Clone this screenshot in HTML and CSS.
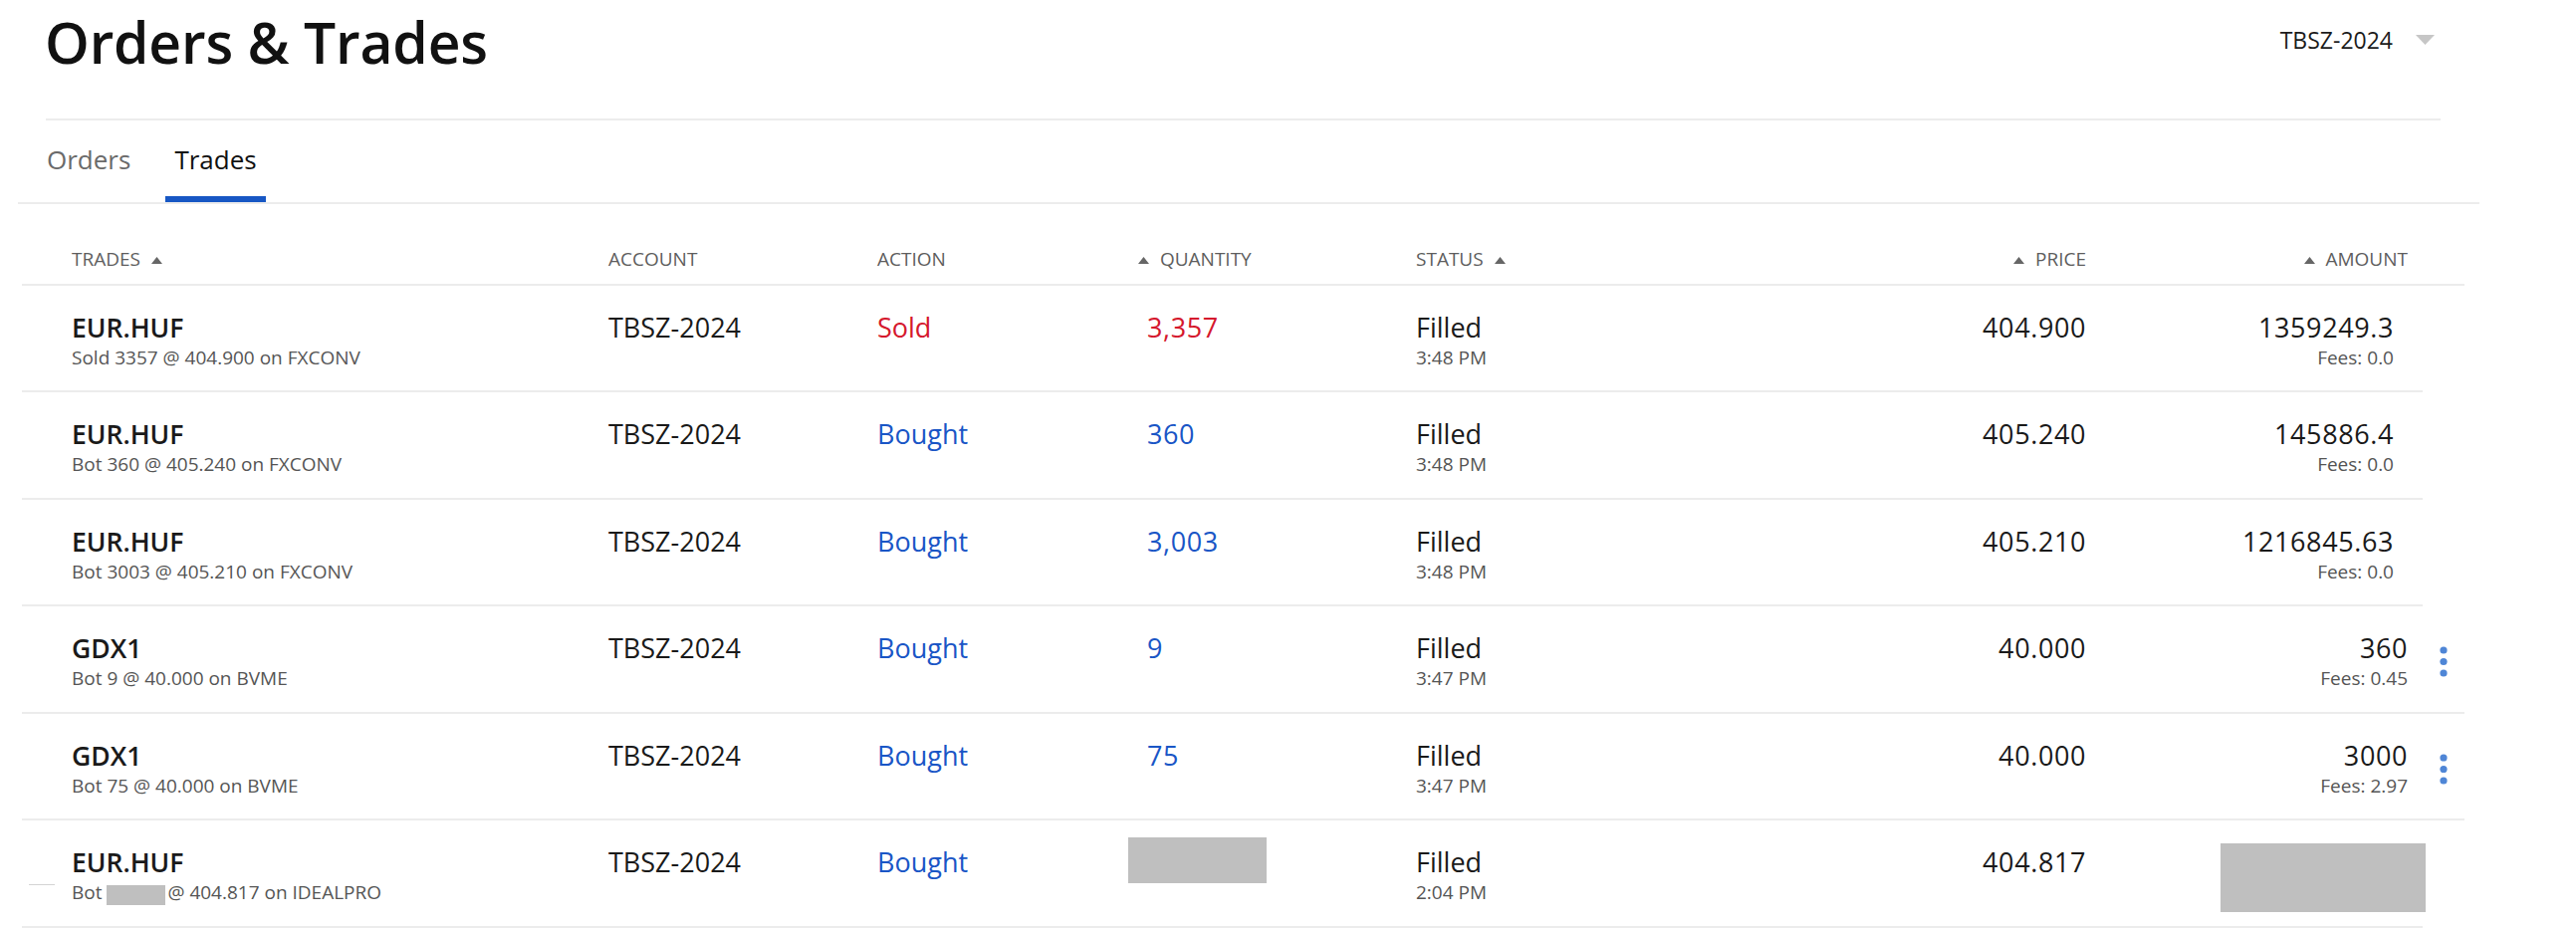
FILE: index.html
```html
<!DOCTYPE html>
<html lang="en">
<head>
<meta charset="utf-8">
<title>Orders &amp; Trades</title>
<link rel="stylesheet" href="styles.css">
</head>
<body>
<div class="page">
  <header class="top">
    <h1 class="title">Orders &amp; Trades</h1>
    <div class="acct">
      <span class="acct-name">TBSZ-2024</span>
      <svg class="caret" width="19" height="10" viewBox="0 0 19 10"><polygon points="0,0 19,0 9.5,10" fill="#c6c6c6"/></svg>
    </div>
  </header>

  <nav class="tabs">
    <a class="tab">Orders</a>
    <a class="tab tab-active">Trades</a>
  </nav>

  <div class="table">
    <div class="thead grid wide">
      <div class="th">TRADES <svg class="sort after" width="11" height="7" viewBox="0 0 11 7"><polygon points="0,7 5.5,0 11,7" fill="#666"/></svg></div>
      <div class="th">ACCOUNT</div>
      <div class="th">ACTION</div>
      <div class="th"><svg class="sort before" width="11" height="7" viewBox="0 0 11 7"><polygon points="0,7 5.5,0 11,7" fill="#666"/></svg> QUANTITY</div>
      <div class="th">STATUS <svg class="sort after" width="11" height="7" viewBox="0 0 11 7"><polygon points="0,7 5.5,0 11,7" fill="#666"/></svg></div>
      <div class="th right"><svg class="sort before" width="11" height="7" viewBox="0 0 11 7"><polygon points="0,7 5.5,0 11,7" fill="#666"/></svg> PRICE</div>
      <div class="th right"><svg class="sort before" width="11" height="7" viewBox="0 0 11 7"><polygon points="0,7 5.5,0 11,7" fill="#666"/></svg> AMOUNT</div>
      <div class="th"></div>
    </div>

    <div class="tr grid plain">
      <div class="cell"><div class="sym">EUR.HUF</div><div class="sub">Sold 3357 @ 404.900 on FXCONV</div></div>
      <div class="cell"><div class="main">TBSZ-2024</div></div>
      <div class="cell"><div class="main sold">Sold</div></div>
      <div class="cell qty"><div class="main num sold">3,357</div></div>
      <div class="cell"><div class="main">Filled</div><div class="sub">3:48 PM</div></div>
      <div class="cell right"><div class="main num">404.900</div></div>
      <div class="cell right"><div class="main num">1359249.3</div><div class="sub">Fees: 0.0</div></div>
      <div class="cell"></div>
    </div>

    <div class="tr grid plain">
      <div class="cell"><div class="sym">EUR.HUF</div><div class="sub">Bot 360 @ 405.240 on FXCONV</div></div>
      <div class="cell"><div class="main">TBSZ-2024</div></div>
      <div class="cell"><div class="main bought">Bought</div></div>
      <div class="cell qty"><div class="main num bought">360</div></div>
      <div class="cell"><div class="main">Filled</div><div class="sub">3:48 PM</div></div>
      <div class="cell right"><div class="main num">405.240</div></div>
      <div class="cell right"><div class="main num">145886.4</div><div class="sub">Fees: 0.0</div></div>
      <div class="cell"></div>
    </div>

    <div class="tr grid plain">
      <div class="cell"><div class="sym">EUR.HUF</div><div class="sub">Bot 3003 @ 405.210 on FXCONV</div></div>
      <div class="cell"><div class="main">TBSZ-2024</div></div>
      <div class="cell"><div class="main bought">Bought</div></div>
      <div class="cell qty"><div class="main num bought">3,003</div></div>
      <div class="cell"><div class="main">Filled</div><div class="sub">3:48 PM</div></div>
      <div class="cell right"><div class="main num">405.210</div></div>
      <div class="cell right"><div class="main num">1216845.63</div><div class="sub">Fees: 0.0</div></div>
      <div class="cell"></div>
    </div>

    <div class="tr grid wide">
      <div class="cell"><div class="sym">GDX1</div><div class="sub">Bot 9 @ 40.000 on BVME</div></div>
      <div class="cell"><div class="main">TBSZ-2024</div></div>
      <div class="cell"><div class="main bought">Bought</div></div>
      <div class="cell qty"><div class="main num bought">9</div></div>
      <div class="cell"><div class="main">Filled</div><div class="sub">3:47 PM</div></div>
      <div class="cell right"><div class="main num">40.000</div></div>
      <div class="cell right"><div class="main num">360</div><div class="sub">Fees: 0.45</div></div>
      <div class="cell menu"><svg class="kebab" width="8" height="31" viewBox="0 0 8 31"><circle cx="4" cy="4" r="3.6" fill="#4f86d6"/><circle cx="4" cy="15.5" r="3.6" fill="#4f86d6"/><circle cx="4" cy="27" r="3.6" fill="#4f86d6"/></svg></div>
    </div>

    <div class="tr grid wide">
      <div class="cell"><div class="sym">GDX1</div><div class="sub">Bot 75 @ 40.000 on BVME</div></div>
      <div class="cell"><div class="main">TBSZ-2024</div></div>
      <div class="cell"><div class="main bought">Bought</div></div>
      <div class="cell qty"><div class="main num bought">75</div></div>
      <div class="cell"><div class="main">Filled</div><div class="sub">3:47 PM</div></div>
      <div class="cell right"><div class="main num">40.000</div></div>
      <div class="cell right"><div class="main num">3000</div><div class="sub">Fees: 2.97</div></div>
      <div class="cell menu"><svg class="kebab" width="8" height="31" viewBox="0 0 8 31"><circle cx="4" cy="4" r="3.6" fill="#4f86d6"/><circle cx="4" cy="15.5" r="3.6" fill="#4f86d6"/><circle cx="4" cy="27" r="3.6" fill="#4f86d6"/></svg></div>
    </div>

    <div class="tr grid plain last">
      <span class="dash"></span>
      <div class="cell"><div class="sym">EUR.HUF</div><div class="sub">Bot <span class="redact-inline"></span>@ 404.817 on IDEALPRO</div></div>
      <div class="cell"><div class="main">TBSZ-2024</div></div>
      <div class="cell"><div class="main bought">Bought</div></div>
      <div class="cell qty"><div class="redact-qty"></div></div>
      <div class="cell"><div class="main">Filled</div><div class="sub">2:04 PM</div></div>
      <div class="cell right"><div class="main num">404.817</div></div>
      <div class="cell right"><div class="redact-amt"></div></div>
      <div class="cell"></div>
    </div>
  </div>
</div>
</body>
</html>
```

FILE: styles.css
```css
* { box-sizing: border-box; }

html, body {
  margin: 0;
  padding: 0;
  background: #ffffff;
}

body {
  font-family: "Open Sans", "Liberation Sans", sans-serif;
  color: #1a1a1a;
}

.page {
  width: 2587px;
}

/* ---------- top header ---------- */
.top {
  display: flex;
  justify-content: space-between;
  align-items: flex-start;
  margin-left: 46px;
  width: 2405px;
  padding-top: 8px;
  padding-bottom: 43px;
  border-bottom: 2px solid #ececec;
}

.title {
  margin: 0 0 0 -1px;
  font-size: 57px;
  line-height: 68px;
  font-weight: 600;
  color: #111111;
  letter-spacing: -0.2px;
}

.acct {
  display: flex;
  align-items: flex-start;
  margin-top: 17px;
  margin-right: 6px;
}

.acct-name {
  font-size: 23px;
  line-height: 30px;
  color: #1c1c1c;
}

.caret {
  display: block;
  margin-left: 23px;
  margin-top: 10px;
}

/* ---------- tabs ---------- */
.tabs {
  display: flex;
  gap: 26px;
  margin-top: 21px;
  margin-left: 18px;
  width: 2472px;
  padding-left: 20px;
  border-bottom: 2px solid #ececec;
}

.tab {
  display: block;
  font-size: 26px;
  line-height: 36px;
  padding: 0 9px 19px;
  color: #6a6a6a;
  border-bottom: 6px solid transparent;
  cursor: pointer;
}

.tab-active {
  color: #111111;
  border-bottom-color: #1757c4;
}

/* ---------- table ---------- */
.table {
  margin-left: 22px;
}

.grid {
  display: grid;
  padding-left: 50px;
}

.grid.wide {
  width: 2453px;
  grid-template-columns: 539px 270px 262px 279px 378px 295px 323px 57px;
}

.grid.plain {
  width: 2411px;
  grid-template-columns: 539px 270px 262px 279px 378px 295px 309px 29px;
}

.thead {
  height: 81.5px;
  padding-top: 43px;
  border-bottom: 2px solid #ececec;
}

.th {
  font-size: 19px;
  line-height: 25px;
  color: #5e5e5e;
  white-space: nowrap;
}

.right { text-align: right; }

.sort {
  display: inline-block;
  vertical-align: 2px;
}
.sort.after { margin-left: 6px; }
.sort.before { margin-right: 6px; }

.tr {
  position: relative;
  height: 107.5px;
  padding-top: 25px;
  border-bottom: 2px solid #ececec;
}

.cell {
  white-space: nowrap;
}

.sym {
  font-size: 26.5px;
  line-height: 34px;
  font-weight: 600;
  color: #1a1a1a;
}

.main {
  font-size: 27px;
  line-height: 34px;
  color: #1a1a1a;
}

.num { letter-spacing: 0.6px; }

.sub {
  margin-top: 1px;
  font-size: 19px;
  line-height: 24px;
  color: #555555;
}

.sold { color: #d5182d; }
.bought { color: #1a56c6; }

.qty { padding-left: 9px; }

.menu {
  padding-left: 32px;
}

.kebab {
  display: block;
  margin-top: 15px;
}

/* ---------- redactions ---------- */
.redact-inline {
  display: inline-block;
  width: 59px;
  height: 20px;
  margin: 0 2px 0 0;
  vertical-align: -6px;
  background: #bfbfbf;
}

.redact-qty {
  width: 139px;
  height: 46px;
  margin-left: -19px;
  margin-top: -8px;
  background: #bfbfbf;
}

.redact-amt {
  display: inline-block;
  width: 206px;
  height: 69px;
  margin-top: -2px;
  margin-right: -32px;
  background: #bfbfbf;
}

.dash {
  position: absolute;
  left: 7px;
  top: 64px;
  width: 26px;
  height: 1px;
  background: #d4d4d4;
}
```
